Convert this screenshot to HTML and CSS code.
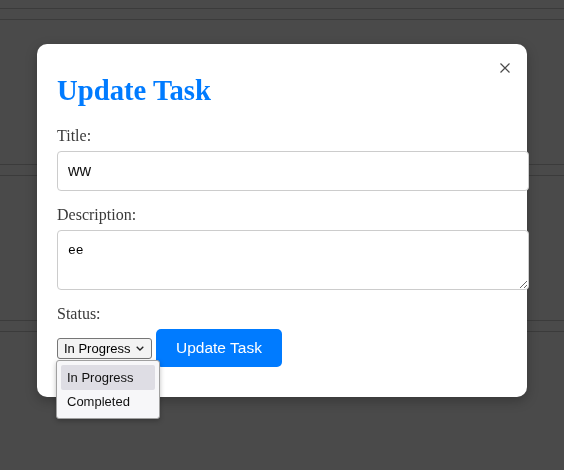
FILE: index.html
```html
<!DOCTYPE html>
<html lang="en">
<head>
<meta charset="utf-8">
<title>Update Task</title>
<link rel="stylesheet" href="styles.css">
</head>
<body>
<div class="page">
  <div class="page-head"></div>
  <div class="task-card"></div>
  <div class="task-card"></div>
  <div class="task-card"></div>
</div>
<div class="overlay">
  <div class="modal">
    <button class="close" type="button" aria-label="Close">
      <svg width="10" height="10" viewBox="0 0 10 10"><path d="M0.5 0.5L9.5 9.5M9.5 0.5L0.5 9.5" stroke="#4a4a4a" stroke-width="1.2" fill="none"/></svg>
    </button>
    <h2 class="modal-title">Update Task</h2>
    <form class="task-form">
      <label class="field-label" for="title">Title:</label>
      <input id="title" class="text-input" type="text" value="ww">
      <label class="field-label" for="desc">Description:</label>
      <textarea id="desc" class="text-area">ee</textarea>
      <label class="field-label" for="status">Status:</label>
      <div class="actions">
        <div class="select-wrap">
          <select id="status" class="status-select">
            <option>In Progress</option>
            <option>Completed</option>
          </select>
          <svg class="chevron" width="8" height="5" viewBox="0 0 8 5"><path d="M0.7 0.7L4 4L7.3 0.7" stroke="#222" stroke-width="1.3" fill="none"/></svg>
          <ul class="dropdown">
            <li class="dropdown-item is-active">In Progress</li>
            <li class="dropdown-item">Completed</li>
          </ul>
        </div>
        <button class="submit" type="button">Update Task</button>
      </div>
    </form>
  </div>
</div>
</body>
</html>
```

FILE: styles.css
```css
html, body {
  margin: 0;
  padding: 0;
}

body {
  background: #4a4a4a;
  width: 564px;
  height: 470px;
  overflow: hidden;
}

.page-head {
  height: 8px;
  border-bottom: 1px solid #3b3b3b;
}

.task-card {
  margin-top: 10px;
  height: 144px;
  border-top: 1px solid #3b3b3b;
  border-bottom: 1px solid #3b3b3b;
}

.overlay {
  position: fixed;
  inset: 0;
  display: flex;
  justify-content: center;
  align-items: flex-start;
  padding-top: 44px;
}

.modal {
  position: relative;
  width: 450px;
  padding: 20px;
  background: #fff;
  border-radius: 10px;
  box-shadow: 0 4px 12px rgba(0, 0, 0, 0.25);
}

.close {
  position: absolute;
  top: 19px;
  right: 17px;
  width: 10px;
  height: 10px;
  padding: 0;
  border: none;
  background: none;
  display: block;
}

.close svg {
  display: block;
}

.modal-title {
  margin: 10px 0 21px;
  font: bold 28.7px/32px "Liberation Serif", "Times New Roman", serif;
  color: #007bff;
}

.task-form {
  margin: 0;
}

.field-label {
  display: block;
  margin-bottom: 6px;
  font: 16px/18px "Liberation Serif", "Times New Roman", serif;
  color: #3a3a3a;
}

.text-input {
  display: block;
  box-sizing: content-box;
  width: 100%;
  height: 18px;
  margin: 0 0 15px;
  padding: 10px;
  border: 1px solid #ccc;
  border-radius: 4px;
  font: 16px/18px "Liberation Sans", Arial, sans-serif;
  color: #111;
  outline: none;
}

.text-area {
  display: block;
  box-sizing: content-box;
  width: 100%;
  height: 38px;
  margin: 0 0 15px;
  padding: 10px;
  border: 1px solid #ccc;
  border-radius: 4px;
  font: 13px/20px "Liberation Mono", "Courier New", monospace;
  color: #000;
  outline: none;
}

.actions {
  display: flex;
  align-items: center;
  gap: 4px;
  margin-bottom: 10px;
}

.select-wrap {
  position: relative;
}

.status-select {
  display: block;
  -webkit-appearance: none;
  appearance: none;
  box-sizing: border-box;
  width: 95px;
  height: 21px;
  margin: 0;
  padding: 0 0 0 6px;
  border: 1px solid #767676;
  border-radius: 3px;
  background: #f3f3f3;
  font: 13px "Liberation Sans", Arial, sans-serif;
  color: #000;
  outline: none;
}

.chevron {
  position: absolute;
  top: 8px;
  right: 8px;
  pointer-events: none;
}

.dropdown {
  position: absolute;
  top: 22px;
  left: -1px;
  box-sizing: border-box;
  width: 104px;
  margin: 0;
  padding: 4px;
  list-style: none;
  background: #f7f7f9;
  border: 1px solid #a0a0a0;
  border-radius: 3px;
  box-shadow: 0 2px 5px rgba(0, 0, 0, 0.25);
  z-index: 2;
}

.dropdown-item {
  height: 24px;
  padding-left: 6px;
  font: 13px/24px "Liberation Sans", Arial, sans-serif;
  color: #111;
  border-radius: 2px;
}

.dropdown-item.is-active {
  height: 25px;
  line-height: 25px;
  background: #dedde4;
}

.submit {
  height: 38px;
  padding: 0 20px;
  border: none;
  border-radius: 5px;
  background: #007bff;
  color: #fff;
  font: 15.5px "Liberation Sans", Arial, sans-serif;
}
```
